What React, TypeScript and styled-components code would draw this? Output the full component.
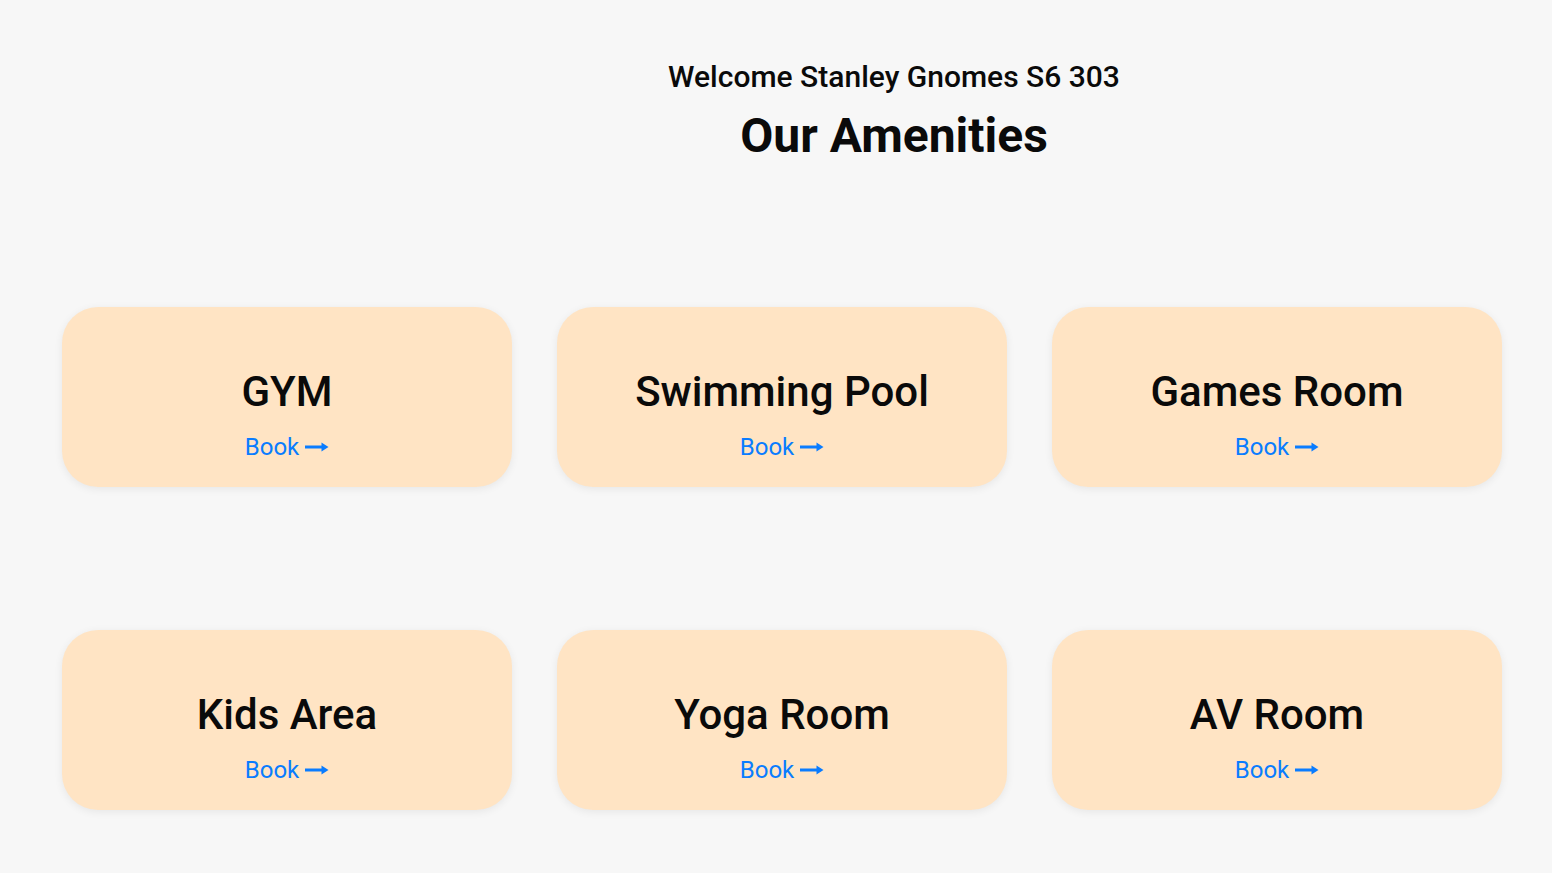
import React from "react";
import styled, { createGlobalStyle } from "styled-components";

const Global = createGlobalStyle`
  html, body { margin: 0; padding: 0; background: #f7f7f7; }
  body { font-family: Roboto, "Liberation Sans", sans-serif; color: #0a0a0a; }
`;

const Page = styled.div`
  min-height: 873px;
  box-sizing: border-box;
  padding: 59px 50px 40px 62px;
`;

const Header = styled.header`
  display: flex;
  flex-direction: column;
  align-items: center;
  padding-left: 224px;
`;

const Welcome = styled.h2`
  margin: 0;
  font-size: 30px;
  font-weight: 500;
  line-height: 36px;
`;

const Title = styled.h1`
  margin: 13px 0 0;
  font-size: 48px;
  font-weight: 700;
  line-height: 56px;
`;

const Grid = styled.div`
  display: grid;
  grid-template-columns: repeat(3, 450px);
  column-gap: 45px;
  row-gap: 143px;
  margin-top: 143px;
`;

const Card = styled.div`
  height: 180px;
  border-radius: 36px;
  background: #ffe4c4;
  box-shadow: 0 2px 8px rgba(0, 0, 0, 0.07);
  display: flex;
  flex-direction: column;
  align-items: center;
  justify-content: flex-start;
  padding-top: 61px;
  box-sizing: border-box;
`;

const CardTitle = styled.h3`
  margin: 0;
  font-size: 42px;
  font-weight: 500;
  line-height: 48px;
`;

const BookLink = styled.a`
  margin-top: 17px;
  display: inline-flex;
  align-items: center;
  gap: 6px;
  color: #0a7cff;
  font-size: 24px;
  line-height: 28px;
  text-decoration: none;
  cursor: pointer;
`;

const Arrow = () => (
  <svg width="24" height="12" viewBox="0 0 24 12" aria-hidden="true">
    <path d="M0 6 H18" stroke="#0a7cff" strokeWidth="3" fill="none" />
    <path d="M16.5 1.5 L23.5 6 L16.5 10.5 Z" fill="#0a7cff" />
  </svg>
);

const amenities = ["GYM", "Swimming Pool", "Games Room", "Kids Area", "Yoga Room", "AV Room"];

export default function App() {
  return (
    <>
      <Global />
      <Page>
        <Header>
          <Welcome>Welcome Stanley Gnomes S6 303</Welcome>
          <Title>Our Amenities</Title>
        </Header>
        <Grid>
          {amenities.map((a) => (
            <Card key={a}>
              <CardTitle>{a}</CardTitle>
              <BookLink>
                Book <Arrow />
              </BookLink>
            </Card>
          ))}
        </Grid>
      </Page>
    </>
  );
}
